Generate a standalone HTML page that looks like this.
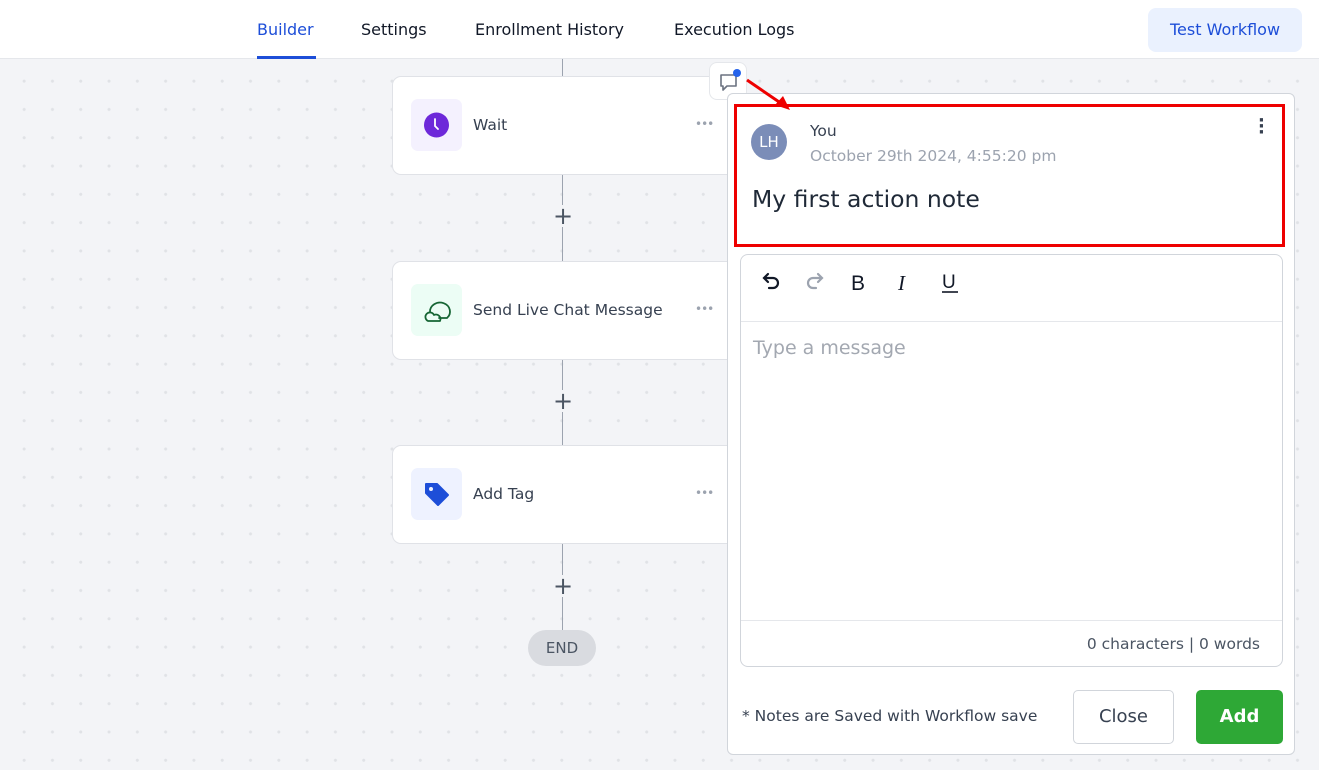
<!DOCTYPE html>
<html><head><style>
*{box-sizing:border-box;margin:0;padding:0}
body{width:1319px;height:770px;overflow:hidden;font-family:"DejaVu Sans",sans-serif;background:#f2f3f6;position:relative;color:#1f2937}
.canvas{position:absolute;left:0;top:59px;width:1319px;height:711px;background-color:#f3f4f7;background-image:radial-gradient(circle,#e0e2e6 1.3px,transparent 1.8px);background-size:28.3px 28.3px;background-position:10px 8px}
.top{position:absolute;left:0;top:0;width:1319px;height:59px;background:#fff;border-bottom:1px solid #e5e7eb}
.tab{position:absolute;top:20px;font-size:16px;color:#111827}
.btn-test{position:absolute;left:1148px;top:8px;width:154px;height:44px;background:#eaf1fe;border-radius:8px;color:#1d4ed8;font-size:16px;text-align:center;line-height:44px}
.line{position:absolute;left:562px;width:1px;background:#9ca3af}
.card{position:absolute;left:392px;width:345px;height:99px;background:#fff;border:1px solid #e0e2e7;border-radius:9px}
.ic{position:absolute;left:18px;top:22px;width:51px;height:52px;border-radius:7px}
.ct{position:absolute;left:80px;top:39px;font-size:15.5px;color:#374151}
.dots{position:absolute;left:302px;top:40px;font-size:12px;color:#9ca3af;letter-spacing:-1px}
.plus{position:absolute;left:553px;font-size:24px;color:#4b5563;background:#f3f4f7;width:19px;text-align:center;line-height:22px}
.panel{position:absolute;left:727px;top:93px;width:568px;height:662px;background:#fff;border:1px solid #d1d5db;border-radius:6px}
</style></head><body>
<div class="canvas"></div>
<div class="top">
<div class="tab" style="left:257px;color:#1d4ed8">Builder</div>
<div style="position:absolute;left:257px;top:56px;width:59px;height:3px;background:#1d4ed8"></div>
<div class="tab" style="left:361px">Settings</div>
<div class="tab" style="left:475px">Enrollment History</div>
<div class="tab" style="left:674px">Execution Logs</div>
<div class="btn-test">Test Workflow</div>
</div>
<div class="line" style="top:59px;height:590px"></div>
<div class="plus" style="top:205px">+</div>
<div class="plus" style="top:390px">+</div>
<div class="plus" style="top:575px">+</div>
<div class="card" style="top:76px"><div class="ic" style="background:#f4f1fe"><svg width="51" height="52"><circle cx="25.5" cy="26" r="12.5" fill="#6d28d9"/><path d="M24 20v7l3 3" stroke="#fff" stroke-width="1.8" fill="none" stroke-linecap="round"/></svg></div><div class="ct">Wait</div><div class="dots">•••</div></div>
<div class="card" style="top:261px"><div class="ic" style="background:#ecfdf5"><svg width="51" height="52"><path d="M19 28a10 9 0 1 1 17 6h-8" stroke="#166534" stroke-width="1.8" fill="none" stroke-linecap="round"/><path d="M17 37a4.5 4.5 0 1 1 6-6a4.5 4.5 0 0 1 6 6z" stroke="#166534" stroke-width="1.8" fill="none" stroke-linejoin="round"/></svg></div><div class="ct">Send Live Chat Message</div><div class="dots">•••</div></div>
<div class="card" style="top:445px"><div class="ic" style="background:#eef2ff"><svg width="51" height="52"><path d="M15 16h11l11 11-10 10-12-12z" fill="#1d4ed8" stroke="#1d4ed8" stroke-width="2" stroke-linejoin="round"/><circle cx="20" cy="21" r="2" fill="#eef2ff"/></svg></div><div class="ct">Add Tag</div><div class="dots">•••</div></div>
<div style="position:absolute;left:528px;top:630px;width:68px;height:36px;border-radius:18px;background:#d9dbe0;color:#4b5563;font-size:15px;text-align:center;line-height:36px">END</div>
<div style="position:absolute;left:709px;top:62px;width:38px;height:38px;background:#fff;border:1px solid #e5e7eb;border-radius:8px"><svg width="38" height="38"><path d="M11 12h15v11h-9l-4 4v-4h-2z" fill="none" stroke="#6b7280" stroke-width="1.6" stroke-linejoin="round"/><circle cx="27" cy="10" r="4" fill="#2563eb"/></svg></div>
<div class="panel">
<div style="position:absolute;left:6px;top:10px;width:551px;height:143px;border:3px solid #e00;"></div>
<div style="position:absolute;left:23px;top:30px;width:36px;height:36px;border-radius:50%;background:#7b8db8;color:#fff;font-size:15px;text-align:center;line-height:36px">LH</div>
<div style="position:absolute;left:82px;top:28px;font-size:15.5px;color:#374151">You</div>
<div style="position:absolute;left:82px;top:53px;font-size:15.5px;color:#9ca3af">October 29th 2024, 4:55:20 pm</div>
<div style="position:absolute;left:530px;top:24px;font-size:18px;color:#374151;line-height:6px;font-weight:bold">·<br>·<br>·</div>
<div style="position:absolute;left:24px;top:91px;font-size:23.5px;color:#1f2937">My first action note</div>
<div style="position:absolute;left:12px;top:160px;width:543px;height:413px;border:1px solid #d1d5db;border-radius:8px">
<div style="position:absolute;left:0;top:66px;width:541px;border-top:1px solid #e5e7eb"></div>
<svg style="position:absolute;left:18px;top:15px" width="220" height="25"><path d="M5 8h9a5 5 0 0 1 0 10h-4 M9 4L5 8l4 4" stroke="#111827" stroke-width="2.2" fill="none" stroke-linecap="round"/><path d="M63 8h-9a5 5 0 0 0 0 10h3 M59 4l4 4-4 4" stroke="#9ca3af" stroke-width="2.2" fill="none" stroke-linecap="round"/><text x="92" y="20" font-size="21" fill="#111827" font-family="Liberation Sans">B</text><text x="139" y="20" font-size="21" fill="#111827" font-style="italic" font-family="Liberation Serif">I</text><text x="183" y="18" font-size="19" fill="#111827" font-family="Liberation Sans">U</text><path d="M183 22h16" stroke="#111827" stroke-width="1.6"/></svg>
<div style="position:absolute;left:12px;top:82px;font-size:19px;color:#a3a8b1">Type a message</div>
<div style="position:absolute;left:0;top:365px;width:541px;border-top:1px solid #e5e7eb"></div>
<div style="position:absolute;right:22px;top:380px;font-size:15.5px;color:#4b5563">0 characters | 0 words</div>
</div>
<div style="position:absolute;left:14px;top:613px;font-size:15.5px;color:#374151">* Notes are Saved with Workflow save</div>
<div style="position:absolute;left:345px;top:596px;width:101px;height:54px;border:1px solid #d1d5db;border-radius:5px;font-size:18px;text-align:center;line-height:52px;color:#374151">Close</div>
<div style="position:absolute;left:468px;top:596px;width:87px;height:54px;background:#2ea836;border-radius:5px;font-size:18px;text-align:center;line-height:54px;color:#fff;font-weight:bold">Add</div>
</div>
<svg style="position:absolute;left:745px;top:78px" width="50" height="36"><path d="M2 2L40 28" stroke="#e00" stroke-width="3"/><path d="M45 32L30 27l8-9z" fill="#e00"/></svg>
</body></html>
